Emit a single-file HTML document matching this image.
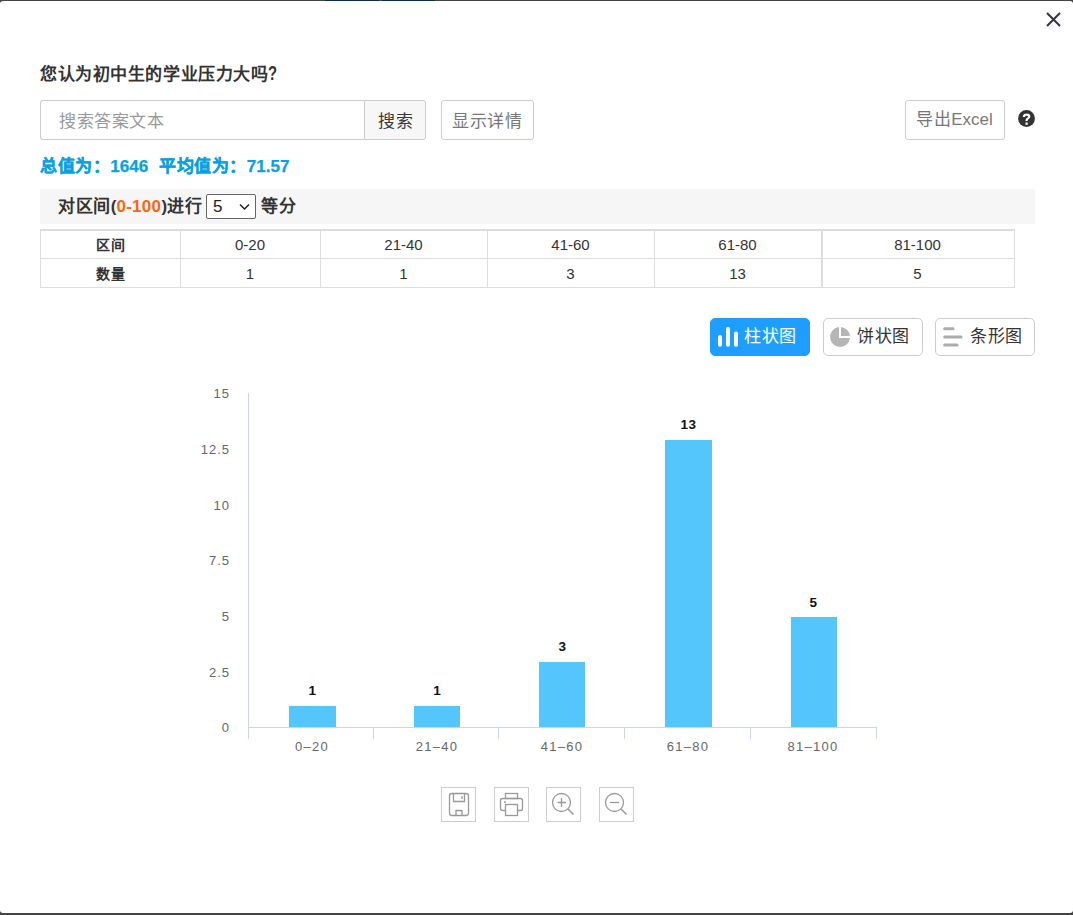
<!DOCTYPE html>
<html lang="zh-CN">
<head>
<meta charset="utf-8">
<style>
html,body{margin:0;padding:0;}
body{width:1073px;height:915px;background:#444;position:relative;overflow:hidden;font-family:"Liberation Sans",sans-serif;color:#333;}
.topseg{position:absolute;top:0;height:1px;background:#0b2a50;}
.modal{position:absolute;left:0;top:1px;width:1073px;height:912px;background:#fff;border-radius:3px;}
.abs{position:absolute;white-space:nowrap;}
.cj{letter-spacing:0.57px;}
.close{position:absolute;left:1046px;top:12px;width:15px;height:15px;}
.title{left:40px;top:63px;font-size:17px;font-weight:bold;line-height:22px;color:#333;}
.inp{left:40px;top:100px;width:324px;height:40px;box-sizing:border-box;border:1px solid #ccc;border-right:none;border-radius:3px 0 0 3px;}
.inp span{position:absolute;left:18px;top:10px;font-size:17px;line-height:22px;color:#999;}
.sbtn{left:364px;top:100px;width:62px;height:40px;box-sizing:border-box;border:1px solid #ccc;border-radius:0 3px 3px 0;background:#f7f7f7;}
.btn{top:100px;height:40px;box-sizing:border-box;border:1px solid #ccc;border-radius:3px;background:#fff;}
.txt{font-size:17px;line-height:22px;}
.stats{top:156px;font-size:17px;font-weight:bold;line-height:22px;color:#07a1e3;-webkit-text-stroke:0.25px #07a1e3;}
.bar{left:40px;top:189px;width:995px;height:35px;background:#f6f6f6;}
.bartxt{top:196px;font-size:17px;font-weight:bold;line-height:22px;color:#333;}
.orange{color:#ff6410;letter-spacing:0.3px;}
.sel{left:206px;top:194px;width:50px;height:25px;box-sizing:border-box;border:1px solid #666;border-radius:2px;background:#fff;}
.sel span{position:absolute;left:6px;top:1px;font-size:17px;line-height:22px;color:#222;}
.tl{position:absolute;background:#ddd;}
.tc{font-size:15px;line-height:22px;text-align:center;color:#333;}
.tc.b{font-weight:bold;font-size:14px;letter-spacing:1px;text-indent:1px;}
.cbtn{top:318px;width:100px;height:38px;box-sizing:border-box;border-radius:5px;font-size:17px;line-height:36px;}
.cbtn.on{background:#1e9fff;color:#fff;border:1px solid #1e9fff;}
.cbtn.off{background:#fff;color:#333;border:1px solid #ccc;}
.tb{position:absolute;top:787px;width:35px;height:35px;box-sizing:border-box;border:1px solid #ccc;}
</style>
</head>
<body>
<div class="topseg" style="left:325px;width:54px"></div>
<div class="topseg" style="left:382px;width:53px"></div>
<div class="modal"></div>
<svg class="close" viewBox="0 0 15 15"><path d="M1 1L14 14M14 1L1 14" stroke="#333344" stroke-width="2" fill="none"/></svg>

<div class="abs title"><span class="cj">您认为初中生的学业压力大吗</span><span style="font-size:18.5px;margin-left:-0.3px;display:inline-block;transform:scale(0.8,1.08);transform-origin:0 80%">?</span></div>

<div class="abs inp"><span class="cj">搜索答案文本</span></div>
<div class="abs sbtn"></div>
<div class="abs txt cj" style="left:378px;top:111px;color:#3a3a3a">搜索</div>
<div class="abs btn" style="left:441px;width:93px;"></div>
<div class="abs txt cj" style="left:452px;top:111px;color:#777">显示详情</div>
<div class="abs btn" style="left:905px;width:100px;"></div>
<div class="abs txt" style="left:916px;top:109px;color:#777"><span class="cj">导出</span>Excel</div>
<svg class="abs" style="left:1018px;top:110px" width="17" height="17" viewBox="0 0 17 17"><circle cx="8.5" cy="8.5" r="8.4" fill="#333"/><path d="M5.9 6.9C5.9 5.4 7.0 4.6 8.6 4.6C10.2 4.6 11.3 5.5 11.3 6.7C11.3 8.3 8.6 8.6 8.6 10.2V10.9" stroke="#fff" stroke-width="2.1" fill="none"/><rect x="7.5" y="12.5" width="2.2" height="2.3" fill="#fff"/></svg>

<div class="abs stats" style="left:40px"><span class="cj">总值为：</span>1646</div>
<div class="abs stats" style="left:159px"><span class="cj">平均值为：</span>71.57</div>

<div class="abs bar"></div>
<div class="abs bartxt" style="left:58px"><span class="cj">对区间</span>(<span class="orange">0-100</span>)<span class="cj">进行</span></div>
<div class="abs sel"><span>5</span>
<svg style="position:absolute;left:32px;top:8px" width="11" height="8" viewBox="0 0 11 8"><path d="M1 1.5L5.5 6L10 1.5" stroke="#222" stroke-width="1.5" fill="none"/></svg>
</div>
<div class="abs bartxt cj" style="left:261px;">等分</div>

<div class="tl" style="left:40px;top:229px;width:975px;height:2px"></div>
<div class="tl" style="left:40px;top:258px;width:975px;height:1px"></div>
<div class="tl" style="left:40px;top:287px;width:975px;height:1px"></div>
<div class="tl" style="left:40px;top:229px;width:1px;height:59px"></div>
<div class="tl" style="left:180px;top:229px;width:1px;height:59px"></div>
<div class="tl" style="left:320px;top:229px;width:1px;height:59px"></div>
<div class="tl" style="left:487px;top:229px;width:1px;height:59px"></div>
<div class="tl" style="left:654px;top:229px;width:1px;height:59px"></div>
<div class="tl" style="left:821px;top:229px;width:2px;height:59px"></div>
<div class="tl" style="left:1014px;top:229px;width:1px;height:59px"></div>
<div class="abs tc b cj" style="left:40px;width:140px;top:234px">区间</div>
<div class="abs tc b cj" style="left:40px;width:140px;top:263px">数量</div>
<div class="abs tc" style="left:180px;width:140px;top:234px">0-20</div>
<div class="abs tc" style="left:180px;width:140px;top:263px">1</div>
<div class="abs tc" style="left:320px;width:167px;top:234px">21-40</div>
<div class="abs tc" style="left:320px;width:167px;top:263px">1</div>
<div class="abs tc" style="left:487px;width:167px;top:234px">41-60</div>
<div class="abs tc" style="left:487px;width:167px;top:263px">3</div>
<div class="abs tc" style="left:654px;width:167px;top:234px">61-80</div>
<div class="abs tc" style="left:654px;width:167px;top:263px">13</div>
<div class="abs tc" style="left:821px;width:193px;top:234px">81-100</div>
<div class="abs tc" style="left:821px;width:193px;top:263px">5</div>


<div class="abs cbtn on" style="left:710px;"></div>
<div class="abs cbtn off" style="left:823px;"></div>
<div class="abs cbtn off" style="left:935px;"></div>
<svg class="abs" style="left:700px;top:315px" width="340" height="40" viewBox="700 315 340 40">
<g stroke="#fff" stroke-width="4" stroke-linecap="round"><path d="M720 337V344.7M728 329V344.7M736 333.6V344.7"/></g>
<path d="M839 327A10 10 0 1 0 850 338H839Z" fill="#b5b5b5"/><path d="M841 326.9A10 10 0 0 1 849.9 336H841Z" fill="#b5b5b5"/>
<g stroke="#acacac" stroke-width="3" stroke-linecap="round"><path d="M944.7 328.8H953M944.7 337H961M944.7 345H957"/></g>
</svg>
<div class="abs cj" style="left:744px;top:326px;font-size:17px;line-height:22px;color:#fff">柱状图</div>
<div class="abs cj" style="left:857px;top:326px;font-size:17px;line-height:22px;color:#333">饼状图</div>
<div class="abs cj" style="left:970px;top:326px;font-size:17px;line-height:22px;color:#333">条形图</div>

<svg class="abs" style="left:0;top:0" width="1073" height="915" viewBox="0 0 1073 915">
<g stroke="#ccd6eb" stroke-width="1" fill="none" shape-rendering="crispEdges">
<path d="M248.5 393V739"/>
<path d="M248 727.5H877"/>
<path d="M373.5 727V739M498.5 727V739M624.5 727V739M750.5 727V739M876.5 727V739"/>
</g>
<g fill="#55c6fb" shape-rendering="crispEdges">
<rect x="289.4" y="705.7" width="46.2" height="21.3"/>
<rect x="414.2" y="706" width="46.2" height="21"/>
<rect x="539.2" y="662" width="46.2" height="65"/>
<rect x="665.4" y="439.7" width="46.2" height="287.3"/>
<rect x="790.5" y="617.1" width="46.2" height="109.9"/>
</g>
<g font-family="Liberation Sans" font-size="13" fill="#666" text-anchor="end" letter-spacing="1">
<text x="230" y="398">15</text>
<text x="230" y="454">12.5</text>
<text x="230" y="509.5">10</text>
<text x="230" y="565">7.5</text>
<text x="230" y="621">5</text>
<text x="230" y="676.5">2.5</text>
<text x="230" y="732">0</text>
</g>
<g font-family="Liberation Sans" font-size="13" fill="#666" text-anchor="middle" letter-spacing="1.3">
<text x="312" y="751">0–20</text>
<text x="437" y="751">21–40</text>
<text x="562" y="751">41–60</text>
<text x="688" y="751">61–80</text>
<text x="813" y="751">81–100</text>
</g>
<g font-family="Liberation Sans" font-size="13.5" font-weight="bold" fill="#111" text-anchor="middle" letter-spacing="0.5" transform="translate(0,-1)">
<text x="312.5" y="695.5">1</text>
<text x="437.3" y="695.5">1</text>
<text x="562.5" y="652">3</text>
<text x="688.5" y="430">13</text>
<text x="813.6" y="607.5">5</text>
</g>
</svg>

<div class="tb" style="left:441px"></div>
<div class="tb" style="left:494px"></div>
<div class="tb" style="left:546px"></div>
<div class="tb" style="left:599px"></div>
<svg class="abs" style="left:0;top:780px" width="700" height="50" viewBox="0 780 700 50">
<g stroke="#999" stroke-width="1.3" fill="none">
<rect x="449.5" y="793.5" width="19" height="22" rx="2.5"/>
<path d="M453.5 793.5V801.5H464.5V793.5"/>
<path d="M462 796V799"/>
<path d="M456 815.5V810.5H462V815.5"/>
<rect x="505.5" y="793.5" width="12" height="5" />
<rect x="500.5" y="798.5" width="22" height="12" rx="2"/>
<rect x="505.5" y="804.5" width="12" height="11" fill="#fff"/>
<circle cx="561.5" cy="802.5" r="9"/>
<path d="M557.5 802.5H566M561.5 798V807"/><path d="M568 809L573.5 814.5" stroke-width="1.6"/>
<circle cx="614.5" cy="802.5" r="9"/>
<path d="M610 802.5H619"/><path d="M621 809L626.5 814.5" stroke-width="1.6"/>
</g>
<circle cx="505" cy="802" r="1" fill="#999"/>
</svg>
</body>
</html>
